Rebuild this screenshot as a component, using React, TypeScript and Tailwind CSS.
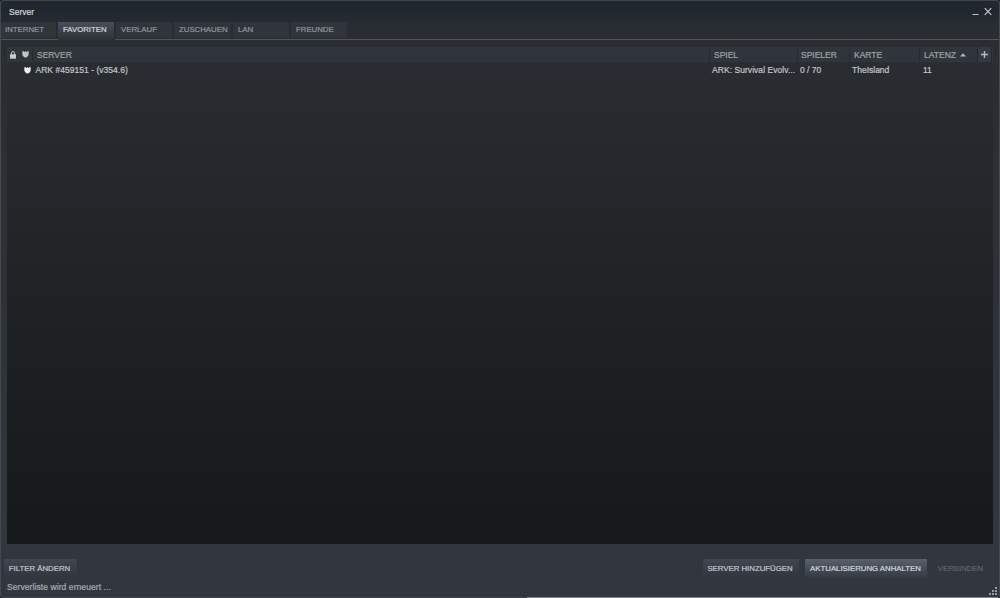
import React, { useState } from 'react';

interface Tab {
  id: string;
  label: string;
  width: string;
}

interface ServerEntry {
  name: string;
  game: string;
  players: string;
  map: string;
  latency: number;
}

const tabs: Tab[] = [
  { id: 'internet', label: 'INTERNET', width: 'w-[56px]' },
  { id: 'favorites', label: 'FAVORITEN', width: 'w-[57px]' },
  { id: 'history', label: 'VERLAUF', width: 'w-[57px]' },
  { id: 'spectate', label: 'ZUSCHAUEN', width: 'w-[58px]' },
  { id: 'lan', label: 'LAN', width: 'w-[57px]' },
  { id: 'friends', label: 'FREUNDE', width: 'w-[57px]' },
];

const servers: ServerEntry[] = [
  { name: 'ARK #459151 - (v354.6)', game: 'ARK: Survival Evolv...', players: '0 / 70', map: 'TheIsland', latency: 11 },
];

const columns = 'grid grid-cols-[12px_13px_677px_88px_52px_70px_58px_16px]';

const LockIcon = () => (
  <svg width="6" height="8" viewBox="0 0 6 8">
    <path d="M1.5 4V2a1.5 1.5 0 0 1 3 0v2" fill="none" stroke="#b9bcb7" strokeWidth="1" />
    <rect x="0" y="3.3" width="6" height="4.4" fill="#c9ccc6" />
  </svg>
);

const ShieldIcon = ({ color }: { color: string }) => (
  <svg width="7" height="7" viewBox="0 0 7 7" fill={color}>
    <path d="M0.3 0.3L1.7 0.3L2.4 1L3.5 0.2L4.6 1L5.3 0.3L6.7 0.3L6.6 4L5.3 5.7L3.5 6.8L1.7 5.7L0.4 4Z" />
  </svg>
);

const ResizeGrip = () => (
  <svg width="8" height="8" viewBox="0 0 8 8" fill="#989b9d" shapeRendering="crispEdges">
    <path d="M6 0h2v2h-2zM3 3h2v2h-2zM6 3h2v2h-2zM0 6h2v2h-2zM3 6h2v2h-2zM6 6h2v2h-2z" />
  </svg>
);

const App: React.FC = () => {
  const [activeTab, setActiveTab] = useState('favorites');

  return (
    <div className="h-[598px] w-[1000px] overflow-hidden bg-[#15191f] font-['Liberation_Sans',Arial,sans-serif] text-[8.5px] leading-[10px] [-webkit-text-stroke:0.2px]">
      <div className="relative flex h-[598px] flex-col overflow-hidden rounded-[3px] border border-t-[#414649] border-r-[#454a4e] border-b-[#42464c] border-l-[#454a4e] bg-[linear-gradient(to_bottom,#20272f_0px,#20272f_10px,#292c31_24px,#2a2d31_70px,#31363e_500px,#32363e_598px)]">
        {/* Title bar */}
        <div className="flex h-[21px] shrink-0 items-start justify-between pt-[6px] pr-[7px] pl-[8px]">
          <span className="text-[#d5d7d9]">Server</span>
          <div className="flex">
            <button className="mr-[5px] h-[9px]" aria-label="Minimize">
              <svg width="7" height="9" viewBox="0 0 7 9">
                <path d="M0.5 7.5h6" stroke="#bfc1c3" strokeWidth="1" />
              </svg>
            </button>
            <button className="h-[9px]" aria-label="Close">
              <svg width="8" height="9" viewBox="0 0 8 9">
                <path d="M0.7 1.2L7.3 7.8M7.3 1.2L0.7 7.8" stroke="#c4c6c8" strokeWidth="1.2" />
              </svg>
            </button>
          </div>
        </div>

        {/* Tabs */}
        <div className="flex h-[18px] shrink-0 gap-px border-b border-[#515357]">
          {tabs.map((tab) => (
            <button
              key={tab.id}
              onClick={() => setActiveTab(tab.id)}
              className={`${tab.width} shrink-0 border-r border-[#292c31] pl-[5px] text-left text-[7.8px] whitespace-nowrap first:pl-[4px] ${
                activeTab === tab.id
                  ? 'h-[18px] bg-gradient-to-b from-[#49505a] to-[#2d3137] pb-[2px] text-[#d5d8dc]'
                  : 'h-[16px] bg-[#30353c] text-[#94979b]'
              }`}
            >
              {tab.label}
            </button>
          ))}
        </div>

        {/* Server list */}
        <div className="mx-[6px] mt-[7px] h-[497px] shrink-0 bg-gradient-to-b from-[#2a2d31] to-[#15191b]">
          <div className={`${columns} h-[15px] items-center bg-[#30353c] text-[#a0a3a5]`}>
            <div className="pl-[3px]"><LockIcon /></div>
            <div className="pl-[3px]"><ShieldIcon color="#c2c6c0" /></div>
            <div className="flex h-[14px] items-center border-l border-[#282c32] pl-[4px]">SERVER</div>
            <div className="flex h-[14px] items-center border-l border-[#282c32] pl-[4px]">SPIEL</div>
            <div className="flex h-[14px] items-center border-l border-[#282c32] pl-[3px]">SPIELER</div>
            <div className="flex h-[14px] items-center border-l border-[#282c32] pl-[4px]">KARTE</div>
            <div className="flex h-[14px] items-center border-l border-[#282c32] pl-[4px]">
              LATENZ
              <svg className="ml-[4px]" width="6" height="4" viewBox="0 0 6 4">
                <path d="M0 3.5L3 0.3L6 3.5Z" fill="#b6b8ba" />
              </svg>
            </div>
            <button className="flex h-[15px] w-[15px] items-center justify-center border-x border-[#242930] bg-[#343a42]" aria-label="Add column">
              <svg width="7" height="7" viewBox="0 0 7 7">
                <path d="M3.5 0v7M0 3.5h7" stroke="#b9bcbf" strokeWidth="1.4" />
              </svg>
            </button>
          </div>
          {servers.map((server) => (
            <div key={server.name} className={`${columns} h-[16px] items-center text-[#c3c6c8]`}>
              <span />
              <div className="pl-[5px]"><ShieldIcon color="#f0f2ef" /></div>
              <div className="pl-[3.5px] tracking-[0.03px]">{server.name}</div>
              <div className="pl-[3px] whitespace-nowrap tracking-[0.05px]">{server.game}</div>
              <div className="pl-[3px]">{server.players}</div>
              <div className="pl-[3px]">{server.map}</div>
              <div className="pl-[4px]">{server.latency}</div>
            </div>
          ))}
        </div>

        {/* Actions */}
        <div className="mt-[15px] flex h-[18px] shrink-0 pr-[9px] pl-[3px] text-[7.8px] whitespace-nowrap">
          <button className="h-[18px] w-[73px] bg-gradient-to-b from-[#404752] to-[#32363e] pt-[2px] pr-[2px] text-[#c5c8cb]">FILTER ÄNDERN</button>
          <div className="ml-auto flex gap-[6px]">
            <button className="h-[18px] w-[96px] bg-gradient-to-b from-[#404752] to-[#32363e] pt-[2px] pr-[2px] text-[#c5c8cb]">SERVER HINZUFÜGEN</button>
            <button className="h-[18px] w-[122px] bg-gradient-to-b from-[#59616e] to-[#363b44] pt-[2px] pr-[1px] text-[#d6d9dc]">AKTUALISIERUNG ANHALTEN</button>
            <button className="h-[18px] w-[57px] bg-[#32373f] pt-[2px] pr-[2px] text-[#60656b]" disabled>VERBINDEN</button>
          </div>
        </div>

        {/* Status */}
        <div className="mt-[5px] pl-[6px] tracking-[0.08px] text-[#aaadb0]">Serverliste wird erneuert ...</div>

        <div className="absolute right-[2px] bottom-[2px]">
          <ResizeGrip />
        </div>
      </div>
      {/* Lighter stretch of the window's lower edge */}
      <div className="relative -mt-px mr-[2px] ml-auto h-px w-[471px] bg-[#85868a]" />
    </div>
  );
};

export default App;
